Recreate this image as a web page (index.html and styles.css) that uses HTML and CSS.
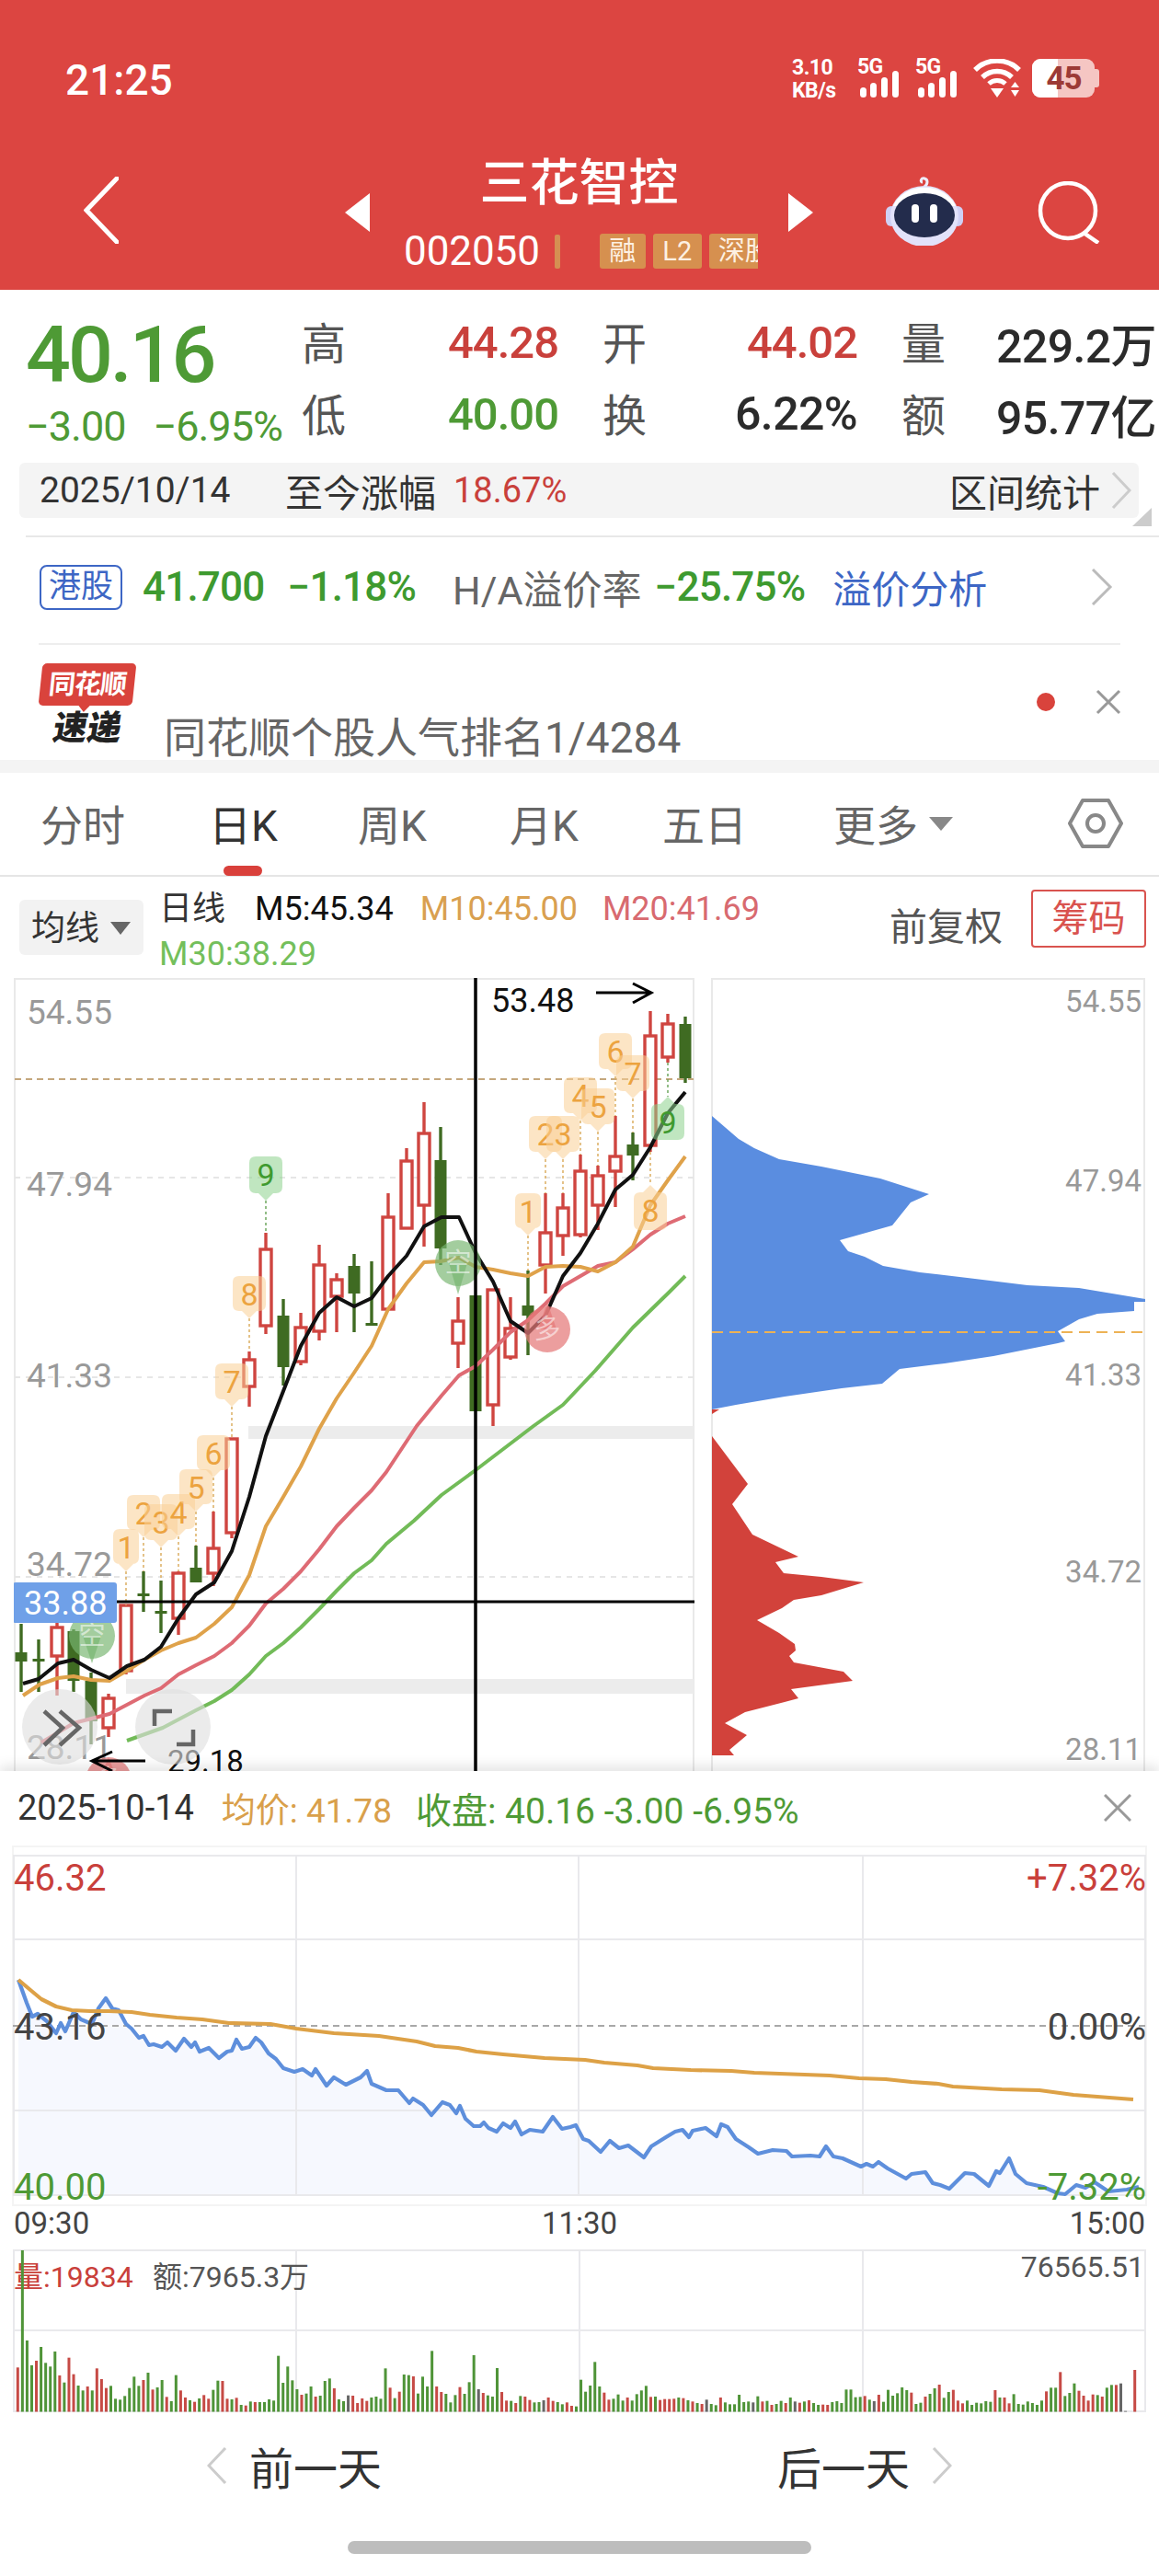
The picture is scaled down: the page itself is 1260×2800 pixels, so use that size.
FILE: index.html
```html
<!DOCTYPE html>
<html lang="zh">
<head>
<meta charset="utf-8">
<title>三花智控</title>
<link rel="stylesheet" href="styles.css">
</head>
<body>
<div class="phone">
  <header class="top">
    <div class="status">
      <span class="clock">21:25</span>
      <div class="status-icons">
        <div class="speed"><span>3.10</span><span>KB/s</span></div>
        <div class="sim">
          <span class="sim-label">5G</span>
          <svg class="signal" viewBox="0 0 47 29"><rect x="3" y="18" width="7" height="11" rx="3.5"/><rect x="14" y="13" width="7" height="16" rx="3.5"/><rect x="26" y="7" width="7" height="22" rx="3.5"/><rect x="38" y="0" width="7" height="29" rx="3.5"/></svg>
        </div>
        <div class="sim">
          <span class="sim-label">5G</span>
          <svg class="signal" viewBox="0 0 47 29"><rect x="3" y="18" width="7" height="11" rx="3.5"/><rect x="14" y="13" width="7" height="16" rx="3.5"/><rect x="26" y="7" width="7" height="22" rx="3.5"/><rect x="38" y="0" width="7" height="29" rx="3.5"/></svg>
        </div>
        <svg class="wifi" viewBox="0 0 52 42"><path d="M2 12 A34 34 0 0 1 50 12" fill="none" stroke="#fff" stroke-width="5.5"/><path d="M10 20 A23 23 0 0 1 42 20" fill="none" stroke="#fff" stroke-width="5.5"/><path d="M17 27 A13 13 0 0 1 35 27" fill="none" stroke="#fff" stroke-width="5"/><path d="M19 32 H33 L26 42Z" fill="#fff"/><path d="M41 31 L45.5 25 L50 31Z M41 34 H50 L45.5 41Z" fill="#fff"/></svg>
        <div class="battery"><div class="battery-level"></div><span class="battery-text">45</span></div>
      </div>
    </div>
    <div class="nav">
      <svg class="back" viewBox="0 0 38 73"><path d="M36 2 L3 36.5 L36 71" fill="none" stroke="#fff" stroke-width="5" stroke-linecap="round"/></svg>
      <svg class="tri" viewBox="0 0 27 42"><path d="M27 0 V42 L0 21Z" fill="#fff"/></svg>
      <div class="stock">
        <div class="stock-name">三花智控</div>
        <div class="stock-sub">
          <span class="stock-code">002050</span>
          <span class="stock-tick"></span>
          <span class="tag">融</span><span class="tag tag-l2">L2</span><span class="tag tag-cut">深股通</span>
        </div>
      </div>
      <svg class="tri" viewBox="0 0 27 42"><path d="M0 0 V42 L27 21Z" fill="#fff"/></svg>
      <svg class="robot" viewBox="0 0 84 77">
        <path d="M42 13 C46 10 46 5 42 4 C38 3 37 8 40 8" fill="none" stroke="#eef" stroke-width="3"/>
        <rect x="0" y="34" width="12" height="22" rx="6" fill="#cfd0f5"/><rect x="72" y="34" width="12" height="22" rx="6" fill="#cfd0f5"/>
        <ellipse cx="42" cy="45" rx="37" ry="33" fill="#e2e2fa"/>
        <path d="M8 34 A36 30 0 0 1 76 34 Z" fill="#ffffff"/>
        <ellipse cx="42" cy="44" rx="33" ry="24" fill="#232c4c"/>
        <rect x="28" y="32" width="8" height="20" rx="4" fill="#fff"/><rect x="48" y="32" width="8" height="20" rx="4" fill="#fff"/>
      </svg>
      <svg class="search" viewBox="0 0 68 68"><circle cx="33" cy="32" r="30" fill="none" stroke="#fff" stroke-width="4.5"/><path d="M50 56 L66 67" fill="none" stroke="#fff" stroke-width="4.5"/></svg>
    </div>
  </header>

  <section class="quote">
    <div class="price">
      <div class="price-now">40.16</div>
      <div class="price-change"><span>−3.00</span><span>−6.95%</span></div>
    </div>
    <div class="stats">
      <div class="stat"><span class="stat-label">高</span><span class="up">44.28</span></div>
      <div class="stat"><span class="stat-label">开</span><span class="up">44.02</span></div>
      <div class="stat"><span class="stat-label">量</span><span class="dark">229.2万</span></div>
      <div class="stat"><span class="stat-label">低</span><span class="down">40.00</span></div>
      <div class="stat"><span class="stat-label">换</span><span class="dark">6.22%</span></div>
      <div class="stat"><span class="stat-label">额</span><span class="dark">95.77亿</span></div>
    </div>
  </section>

  <section class="range">
    <span class="range-date">2025/10/14</span>
    <span class="range-label">至今涨幅</span>
    <span class="range-value">18.67%</span>
    <span class="range-link">区间统计</span>
    <svg class="chev-range" viewBox="0 0 22 40"><path d="M2 1 L20 20 L2 39" fill="none" stroke="#ccc" stroke-width="3"/></svg>
    <span class="range-corner"></span>
  </section>

  <section class="hk">
    <span class="hk-badge">港股</span>
    <span class="hk-price">41.700</span>
    <span class="hk-pct">−1.18%</span>
    <span class="hk-label">H/A溢价率</span>
    <span class="hk-prem">−25.75%</span>
    <span class="hk-link">溢价分析</span>
    <svg class="chev-hk" viewBox="0 0 24 40"><path d="M2 1 L21 20 L2 39" fill="none" stroke="#bbb" stroke-width="3"/></svg>
  </section>

  <section class="news">
    <div class="news-logo">
      <div class="news-logo-top"><span>同花顺</span></div>
      <div class="news-logo-bottom">速递</div>
    </div>
    <span class="news-text">同花顺个股人气排名1/4284</span>
    <span class="news-dot"></span>
    <svg class="news-close" viewBox="0 0 28 28"><path d="M2 2 L26 26 M26 2 L2 26" stroke="#999" stroke-width="3" fill="none"/></svg>
  </section>

  <nav class="tabs">
    <span class="tab">分时</span>
    <span class="tab tab-active">日K</span>
    <span class="tab">周K</span>
    <span class="tab">月K</span>
    <span class="tab">五日</span>
    <span class="tab tab-more">更多<svg class="more-caret" viewBox="0 0 26 15"><path d="M0 0 H26 L13 15Z" fill="#888"/></svg></span>
    <svg class="hex" viewBox="0 0 60 56"><path d="M16 3 H44 L58 28 L44 53 H16 L2 28Z" fill="none" stroke="#888" stroke-width="4" stroke-linejoin="round"/><circle cx="30" cy="28" r="9" fill="none" stroke="#888" stroke-width="4"/></svg>
  </nav>

  <section class="ma-row">
    <div class="ma-select">均线<svg class="ma-caret" viewBox="0 0 22 14"><path d="M0 0 H22 L11 14Z" fill="#666"/></svg></div>
    <div class="ma-legend">
      <div class="ma-line">
        <span class="ma-title">日线</span>
        <span class="ma-5">M5:45.34</span>
        <span class="ma-10">M10:45.00</span>
        <span class="ma-20">M20:41.69</span>
      </div>
      <div class="ma-line"><span class="ma-30">M30:38.29</span></div>
    </div>
    <span class="ma-adjust">前复权</span>
    <span class="ma-chip">筹码</span>
  </section>

  <section class="charts">
    <svg class="kline" viewBox="15 1063 740 862">
      <path class="panel-edge" d="M16 1925 V1064 H754 V1925"/>
      <rect class="band" x="270" y="1550" width="484" height="14"/>
      <rect class="band" x="137" y="1825" width="617" height="16"/>
      <path class="grid-dash" d="M16 1280 H754 M16 1497 H754 M16 1714 H754"/>
      <path class="last-dash" d="M16 1173 H754"/>
      <text class="axis" x="29" y="1113">54.55</text>
      <text class="axis" x="29" y="1300">47.94</text>
      <text class="axis" x="29" y="1508">41.33</text>
      <text class="axis" x="29" y="1713">34.72</text>
      <text class="axis" x="29" y="1912">28.11</text>
      <g id="candles"></g>
      <polyline class="ma ma-green" points="138,1892 177,1878 213,1859 233,1849 252,1837 271,1820 289,1800 308,1786 327,1769 347,1749 366,1729 385,1710 404,1696 420,1678 450,1653 480,1625 517,1598 580,1550 612,1527 647,1490 688,1443 727,1405 745,1387"/>
      <polyline class="ma ma-pink" points="45,1894 80,1873 119,1863 157,1843 175,1835 194,1820 213,1810 233,1800 252,1786 271,1767 289,1743 308,1727 327,1708 347,1684 366,1659 385,1639 404,1620 420,1600 453,1550 480,1517 499,1495 517,1485 536,1467 555,1448 574,1435 593,1417 612,1398 631,1387 650,1376 669,1372 688,1358 707,1342 726,1330 745,1322"/>
      <polyline class="ma ma-orange" points="25,1843 43,1831 63,1824 80,1822 99,1826 119,1827 138,1816 157,1804 175,1794 194,1786 213,1780 233,1765 252,1747 271,1712 289,1659 308,1627 327,1594 347,1553 366,1520 385,1492 404,1463 422,1423 442,1395 461,1372 479,1371 499,1367 517,1377 536,1380 555,1384 574,1387 593,1377 612,1376 631,1377 650,1382 669,1372 688,1355 707,1310 726,1283 745,1257"/>
      <polyline class="ma ma-black" points="25,1830 42,1825 63,1808 80,1804 99,1815 119,1824 138,1811 157,1804 175,1790 194,1759 213,1733 233,1720 252,1686 271,1627 289,1561 308,1512 327,1463 347,1427 366,1410 385,1420 404,1411 422,1387 442,1365 461,1333 480,1323 499,1323 517,1362 536,1393 555,1436 574,1449 593,1430 612,1387 631,1362 650,1330 669,1293 688,1277 707,1247 726,1210 745,1187"/>
      <g id="markers"></g>
      <path class="cross" d="M517 1063 V1925"/>
      <path class="cross-h" d="M127 1741 H755"/>
      <rect class="price-box" x="14" y="1720" width="113" height="44" rx="3"/>
      <text class="price-box-text" x="26" y="1755">33.88</text>
      <text class="extreme" x="534" y="1100">53.48</text>
      <path class="arrow" d="M648 1079 H706 M688 1069 L708 1079 L688 1090"/>
      <text class="extreme extreme-low" x="182" y="1926">29.18</text>
      <path class="arrow" d="M158 1914 H102 M122 1904 L100 1914 L122 1925"/>
      <circle class="float-btn" cx="65" cy="1877" r="41"/>
      <circle class="float-btn" cx="188" cy="1877" r="41"/>
      <path class="float-icon" d="M48 1860 L68 1878 L48 1897 M65 1860 L86 1878 L65 1897"/>
      <path class="float-icon" d="M168 1876 V1860 H187 M210 1880 V1896 H192"/>
    </svg>
    <svg class="chips" viewBox="773 1063 472 862">
      <path class="panel-edge" d="M774 1925 V1064 H1244 V1925"/>
      <polygon class="chip-blue" points="774,1213 803,1238 820,1248 847,1260 893,1268 957,1281 1010,1298 990,1307 970,1332 913,1348 922,1360 940,1366 960,1376 1000,1383 1060,1390 1117,1397 1173,1400 1233,1410 1245,1412 1245,1415 1233,1415 1233,1425 1193,1428 1173,1434 1150,1447 1158,1458 1150,1460 1080,1474 1027,1482 978,1488 959,1504 915,1509 853,1518 800,1527 774,1532"/>
      <polygon class="chip-red" points="774,1532 782,1532 774,1537"/>
      <polygon class="chip-red" points="774,1561 813,1613 796,1635 818,1668 868,1692 843,1698 852,1710 893,1714 939,1720 893,1734 863,1739 850,1748 823,1761 847,1775 864,1787 865,1794 858,1800 863,1807 917,1817 927,1827 860,1836 868,1846 853,1850 810,1861 788,1873 812,1886 793,1902 798,1908 774,1908"/>
      <path class="chip-dash" d="M774 1448 H1245"/>
      <text class="axis-right" x="1241" y="1100">54.55</text>
      <text class="axis-right" x="1241" y="1295">47.94</text>
      <text class="axis-right" x="1241" y="1506">41.33</text>
      <text class="axis-right" x="1241" y="1720">34.72</text>
      <text class="axis-right" x="1241" y="1913">28.11</text>
    </svg>
  </section>

  <section class="sheet">
    <div class="sheet-head">
      <span class="sheet-date">2025-10-14</span>
      <span class="sheet-avg">均价: 41.78</span>
      <span class="sheet-close">收盘: 40.16 -3.00 -6.95%</span>
      <svg class="sheet-x" viewBox="0 0 30 30"><path d="M1 1 L29 29 M29 1 L1 29" stroke="#999" stroke-width="3" fill="none"/></svg>
    </div>
    <svg class="intraday" viewBox="0 2005 1260 395">
      <rect class="box-pale" x="14" y="2007" width="1232" height="390"/>
      <polygon class="area" points="20,2152 29,2177 35,2192 41,2189 51,2197 61,2210 66,2199 71,2208 80,2187 88,2195 100,2200 107,2183 115,2172 122,2183 129,2185 137,2200 143,2205 151,2215 156,2213 162,2223 167,2222 176,2225 182,2220 191,2229 200,2216 208,2225 212,2220 217,2230 227,2226 238,2237 247,2230 252,2229 257,2217 263,2227 271,2225 278,2215 284,2220 292,2232 300,2238 308,2248 320,2252 329,2249 339,2256 343,2249 355,2267 363,2258 376,2266 392,2258 399,2251 404,2265 420,2272 433,2272 445,2286 449,2281 460,2288 469,2299 481,2285 489,2288 496,2297 500,2289 506,2303 515,2311 522,2311 526,2307 531,2313 540,2317 547,2308 555,2313 560,2306 567,2320 576,2315 590,2317 601,2301 611,2314 620,2312 626,2310 634,2325 640,2327 653,2339 663,2327 673,2335 683,2332 700,2345 708,2333 724,2323 734,2317 742,2315 749,2323 753,2316 767,2313 779,2322 784,2309 791,2312 800,2325 814,2334 824,2341 840,2337 855,2338 861,2344 881,2343 891,2344 898,2333 906,2344 916,2346 936,2355 942,2352 949,2355 955,2350 965,2357 985,2368 991,2363 1006,2361 1014,2373 1022,2375 1032,2379 1049,2362 1059,2363 1075,2376 1083,2360 1087,2362 1097,2346 1104,2363 1116,2373 1134,2377 1150,2384 1158,2385 1170,2375 1180,2378 1190,2372 1205,2382 1225,2380 1238,2377 1238,2386 20,2386"/>
      <path class="grid" d="M14 2017 H1246 M14 2108 H1246 M14 2294 H1246 M14 2386 H1246 M15 2017 V2386 M322 2017 V2386 M629 2017 V2386 M938 2017 V2386 M1245 2017 V2386"/>
      <path class="zero-dash" d="M14 2202 H1246"/>
      <polyline class="day-blue" points="20,2152 29,2177 35,2192 41,2189 51,2197 61,2210 66,2199 71,2208 80,2187 88,2195 100,2200 107,2183 115,2172 122,2183 129,2185 137,2200 143,2205 151,2215 156,2213 162,2223 167,2222 176,2225 182,2220 191,2229 200,2216 208,2225 212,2220 217,2230 227,2226 238,2237 247,2230 252,2229 257,2217 263,2227 271,2225 278,2215 284,2220 292,2232 300,2238 308,2248 320,2252 329,2249 339,2256 343,2249 355,2267 363,2258 376,2266 392,2258 399,2251 404,2265 420,2272 433,2272 445,2286 449,2281 460,2288 469,2299 481,2285 489,2288 496,2297 500,2289 506,2303 515,2311 522,2311 526,2307 531,2313 540,2317 547,2308 555,2313 560,2306 567,2320 576,2315 590,2317 601,2301 611,2314 620,2312 626,2310 634,2325 640,2327 653,2339 663,2327 673,2335 683,2332 700,2345 708,2333 724,2323 734,2317 742,2315 749,2323 753,2316 767,2313 779,2322 784,2309 791,2312 800,2325 814,2334 824,2341 840,2337 855,2338 861,2344 881,2343 891,2344 898,2333 906,2344 916,2346 936,2355 942,2352 949,2355 955,2350 965,2357 985,2368 991,2363 1006,2361 1014,2373 1022,2375 1032,2379 1049,2362 1059,2363 1075,2376 1083,2360 1087,2362 1097,2346 1104,2363 1116,2373 1134,2377 1150,2384 1158,2385 1170,2375 1180,2378 1190,2372 1205,2382 1225,2380 1238,2377"/>
      <polyline class="day-orange" points="20,2152 33,2163 45,2173 61,2181 78,2185 98,2186 118,2186 143,2187 163,2190 192,2193 220,2195 249,2199 294,2200 322,2205 363,2210 412,2213 453,2219 473,2224 498,2226 518,2230 547,2233 592,2237 636,2239 657,2242 693,2245 710,2248 751,2250 795,2251 820,2253 902,2256 934,2259 963,2260 991,2263 1020,2265 1036,2268 1089,2271 1130,2272 1167,2277 1232,2282"/>
      <text class="day-axis day-up" x="15" y="2055">46.32</text>
      <text class="day-axis day-flat" x="15" y="2217">43.16</text>
      <text class="day-axis day-down" x="15" y="2391">40.00</text>
      <text class="day-axis day-up day-end" x="1246" y="2055">+7.32%</text>
      <text class="day-axis day-flat day-end" x="1246" y="2217">0.00%</text>
      <text class="day-axis day-down day-end" x="1246" y="2391">-7.32%</text>
    </svg>
    <div class="time-axis"><span>09:30</span><span>11:30</span><span>15:00</span></div>
    <svg id="volume" class="volume" viewBox="0 2444 1260 180">
      <path class="grid" d="M14 2446 H1246 M14 2533 H1246 M14 2621 H1246 M15 2446 V2621 M322 2446 V2621 M630 2446 V2621 M938 2446 V2621 M1245 2446 V2621"/>
      <text class="vol-text" x="15" y="2486"><tspan class="vol-red">量:19834</tspan><tspan class="vol-gray" x="166">额:7965.3万</tspan></text>
      <g id="vol-bars"></g>
      <text class="vol-text vol-gray vol-end" x="1244" y="2475">76565.51</text>
    </svg>
    <div class="day-nav">
      <div class="day-link">
        <svg class="chev-day" viewBox="0 0 22 40"><path d="M20 1 L2 20 L20 39" fill="none" stroke="#ccc" stroke-width="3"/></svg>
        <span>前一天</span>
      </div>
      <div class="day-link">
        <span>后一天</span>
        <svg class="chev-day" viewBox="0 0 22 40"><path d="M2 1 L20 20 L2 39" fill="none" stroke="#ccc" stroke-width="3"/></svg>
      </div>
    </div>
    <div class="home-bar"></div>
  </section>
</div>
<script src="script.js"></script>
</body>
</html>
```
FILE: styles.css
```css
* { box-sizing: border-box; }
html, body { margin: 0; padding: 0; background: #fff; }
body { font-family: Roboto, "Noto Sans CJK SC", sans-serif; color: #333; }
svg { display: block; flex: none; }
.phone { width: 1260px; height: 2800px; overflow: hidden; }

.top { height: 315px; background: #dc4541; color: #fff; padding-top: 64px; }
.status { height: 42px; display: flex; justify-content: space-between; padding: 0 65px 0 71px; }
.clock { font-size: 46px; font-weight: 500; line-height: 44px; margin-top: 1px; }
.status-icons { display: flex; align-items: flex-start; }
.speed { width: 71px; margin-top: -3px; display: flex; flex-direction: column; font-size: 23px; font-weight: 700; line-height: 25px; letter-spacing: -.5px; }
.sim { width: 63px; display: flex; flex-direction: column; }
.sim-label { font-size: 23px; font-weight: 700; line-height: 18px; letter-spacing: -.8px; }
.signal { width: 47px; height: 29px; margin-top: -5px; fill: #fff; }
.wifi { width: 52px; height: 42px; margin-right: 12px; }
.battery { position: relative; width: 73px; height: 42px; display: flex; align-items: center; justify-content: center; }
.battery::before { content: ""; position: absolute; left: 0; top: 0; bottom: 0; width: 68px; background: #f5c6c3; border-radius: 9px; }
.battery::after { content: ""; position: absolute; right: 0; top: 11px; width: 6px; height: 20px; background: #f5c6c3; border-radius: 0 3px 3px 0; }
.battery-level { position: absolute; left: 0; top: 0; bottom: 0; width: 28px; background: #fff; border-radius: 9px 0 0 9px; }
.battery-text { position: relative; font-size: 35px; font-weight: 700; color: #9c3a36; letter-spacing: -1px; margin-right: 4px; }

.nav { margin-top: 67px; display: grid; grid-template-columns: 284px 27px 455px 27px 79px 84px 81px 68px; padding-left: 91px; height: 119px; }
.back { grid-column: 1; width: 38px; height: 73px; margin-top: 19px; }
.tri { width: 27px; height: 42px; margin-top: 37px; }
.stock { display: flex; flex-direction: column; align-items: center; }
.stock-name { font-size: 54px; line-height: 54px; font-weight: 500; }
.stock-sub { align-self: flex-start; margin-left: 37px; margin-top: 27px; display: flex; align-items: center; height: 38px; }
.stock-code { font-size: 44px; line-height: 38px; letter-spacing: -.1px; }
.stock-tick { width: 6px; height: 37px; background: #d58f52; margin-left: 16px; margin-right: 43px; border-radius: 2px; }
.tag { width: 50px; height: 38px; background: #d6904f; color: #fdf0e2; font-size: 29px; line-height: 38px; text-align: center; border-radius: 3px; margin-right: 8px; }
.tag-l2 { width: 53px; }
.tag-cut { width: 53px; margin-right: 0; border-radius: 3px 0 0 3px; overflow: hidden; white-space: nowrap; text-align: left; padding-left: 10px; }
.robot { grid-column: 6; width: 84px; height: 77px; margin-top: 17px; }
.search { grid-column: 8; width: 68px; height: 68px; margin-top: 24px; }

.quote { height: 188px; display: flex; padding: 24px 0 0 28px; }
.price { width: 300px; }
.price-now { font-size: 86px; line-height: 90px; font-weight: 500; color: #4e9a35; letter-spacing: -3px; margin-top: 2px; }
.price-change { display: flex; gap: 30px; font-size: 45px; line-height: 50px; color: #4e9a35; margin-top: 8px; letter-spacing: -1px; }
.stats { display: grid; grid-template-columns: 279px 277px 277px; grid-auto-rows: 78px; column-gap: 48px; margin-top: 1px; }
.stat { display: flex; justify-content: space-between; align-items: center; height: 60px; font-size: 49px; letter-spacing: -1px; font-weight: 500; }
.stat-label { font-size: 48px; font-weight: 400; color: #555; letter-spacing: 0; }
.up { color: #c9403b; margin-top: 4px; }
.down { color: #4e9a35; margin-top: 4px; }
.dark { color: #2b2b2b; margin-top: 4px; font-size: 50px; letter-spacing: -.6px; }

.range { position: relative; height: 60px; margin: 0 22px 19px 21px; background: #f4f4f4; border-radius: 6px; display: flex; align-items: center; padding-left: 22px; font-size: 39px; }
.range-date { width: 267px; color: #333; }
.range-label { width: 183px; font-size: 41px; color: #333; }
.range-value { color: #c9403b; font-size: 38px; }
.range-link { margin-left: auto; font-size: 41px; color: #333; margin-right: 12px; }
.chev-range { width: 22px; height: 40px; margin-right: 8px; }
.range-corner { position: absolute; right: -14px; bottom: -9px; width: 21px; height: 20px; background: #ccc; clip-path: polygon(100% 0, 100% 100%, 0 100%); }

.hk { height: 118px; margin-left: 28px; border-top: 2px solid #e8e8e8; display: flex; align-items: center; padding: 0 50px 8px 15px; font-size: 44px; }
.hk-badge { width: 90px; height: 49px; border: 2px solid #3d66c5; border-radius: 8px; color: #3d66c5; font-size: 35px; line-height: 44px; text-align: center; margin-right: 22px; }
.hk-price, .hk-pct, .hk-prem { color: #3e9a2f; font-weight: 500; letter-spacing: -.8px; }
.hk-pct { margin-left: 25px; }
.hk-label { margin-left: 40px; color: #666; font-size: 43px; }
.hk-prem { margin-left: 14px; }
.hk-link { margin-left: 30px; color: #3d66c5; font-size: 42px; margin-top: -2px; }
.chev-hk { width: 24px; height: 40px; margin-left: auto; }

.news { position: relative; height: 140px; border-bottom: 14px solid #f4f4f4; padding-top: 21px; display: flex; }
.news::before { content: ""; position: absolute; left: 42px; right: 42px; top: -1px; height: 2px; background: #eee; }
.news-logo { margin-left: 44px; width: 102px; }
.news-logo-top { position: relative; height: 46px; background: #d9433c; border-radius: 5px; transform: skewX(-6deg); color: #fff; font-size: 29px; font-weight: 700; line-height: 46px; text-align: center; }
.news-logo-top::after { content: ""; position: absolute; left: 43px; bottom: -7px; width: 14px; height: 8px; background: #d9433c; clip-path: polygon(0 0, 100% 0, 50% 100%); }
.news-logo-top span { display: inline-block; letter-spacing: -1px; }
.news-logo-bottom { transform: skewX(-10deg); font-size: 37px; font-weight: 900; color: #222; line-height: 42px; text-align: center; margin-top: 4px; }
.news-text { font-size: 46px; color: #666; line-height: 62px; margin-left: 32px; margin-top: 50px; height: 55px; overflow: hidden; }
.news-dot { width: 20px; height: 20px; border-radius: 50%; background: #d9433c; margin-left: auto; margin-top: 32px; }
.news-close { width: 28px; height: 28px; margin: 28px 41px 0 44px; }

.tabs { position: relative; height: 113px; border-bottom: 2px solid #e5e5e5; display: grid; grid-template-columns: 185px 160px 165px 166px 186px 255px 60px; padding: 35px 0 0 44px; font-size: 46px; line-height: 46px; color: #666; align-items: start; }
.tab { position: relative; white-space: nowrap; }
.tab-active { color: #333; margin-left: -2px; }
.tab-active::after { content: ""; position: absolute; left: 16px; width: 42px; height: 11px; top: 66px; background: #d9403b; border-radius: 6px; }
.tab-more { display: flex; align-items: center; }
.more-caret { width: 26px; height: 15px; margin-left: 12px; margin-top: -6px; }
.hex { width: 60px; height: 56px; margin-top: -8px; }

.ma-row { height: 110px; display: flex; padding: 25px 14px 0 21px; align-items: flex-start; }
.ma-select { width: 135px; height: 60px; background: #f2f2f2; border-radius: 6px; font-size: 37px; line-height: 52px; padding: 4px 0 0 13px; display: flex; align-items: center; color: #333; }
.ma-caret { width: 22px; height: 14px; margin: -3px 0 0 12px; }
.ma-legend { margin-left: 17px; margin-top: -14px; font-size: 36px; line-height: 49px; flex: 1; }
.ma-line { display: flex; gap: 29px; }
.ma-title { color: #333; margin-right: 3px; }
.ma-5 { color: #111; }
.ma-10 { color: #d9a050; }
.ma-20 { color: #d86a70; margin-left: -2px; }
.ma-30 { color: #74bf5c; }
.ma-adjust { font-size: 41px; line-height: 48px; color: #555; margin-top: 6px; margin-right: 31px; }
.ma-chip { width: 125px; height: 63px; border: 2px solid #d9534f; border-radius: 4px; color: #d9534f; font-size: 40px; line-height: 59px; text-align: center; margin-top: -11px; }

.charts { height: 862px; display: flex; padding-left: 15px; gap: 18px; }
.kline { width: 740px; height: 862px; overflow: hidden; }
.chips { width: 472px; height: 862px; overflow: hidden; }
.panel-edge { fill: none; stroke: #e9e9e9; stroke-width: 2; }
.band { fill: #ececec; }
.grid-dash { stroke: #e6e6e6; stroke-width: 2; stroke-dasharray: 6 6; fill: none; }
.last-dash { stroke: #c4a77d; stroke-width: 2; stroke-dasharray: 7 5; fill: none; }
.axis { font-size: 37px; fill: #999; }
.axis-right { font-size: 33px; fill: #999; text-anchor: end; }
.ma { fill: none; stroke-width: 4; stroke-linejoin: round; }
.ma-black { stroke: #111; }
.ma-orange { stroke: #dfa24a; }
.ma-pink { stroke: #de6b74; }
.ma-green { stroke: #72bb58; }
.cross { stroke: #000; stroke-width: 3.5; fill: none; }
.cross-h { stroke: #000; stroke-width: 3; fill: none; }
.price-box { fill: #6fa0e8; }
.price-box-text { font-size: 36px; fill: #fff; }
.extreme { font-size: 36px; fill: #111; }
.extreme-low { font-size: 33px; }
.arrow { stroke: #000; stroke-width: 3; fill: none; }
.float-btn { fill: rgba(222, 222, 222, .62); }
.float-icon { stroke: #666; stroke-width: 4.5; fill: none; }
.candle-wick-red { stroke: #cf4540; stroke-width: 3.4; }
.candle-wick-green { stroke: #3f6b22; stroke-width: 3.4; }
.candle-hollow { fill: #fff; stroke: #cf4540; stroke-width: 3.4; }
.candle-solid { fill: #3f6b22; }
.mark-o { fill: rgba(250, 208, 150, .55); }
.mark-g { fill: rgba(140, 210, 140, .55); }
.mark-num-o { font-size: 34px; fill: #eca33f; text-anchor: middle; }
.mark-num-g { font-size: 34px; fill: #3f9a2f; text-anchor: middle; }
.lead-o { stroke: #dcae62; stroke-width: 1.5; stroke-dasharray: 3 3; }
.lead-g { stroke: #6fa85f; stroke-width: 1.5; stroke-dasharray: 3 3; }
.sig-kong { fill: rgba(120, 182, 112, .68); }
.sig-duo { fill: rgba(228, 120, 120, .72); }
.sig-text { font-size: 29px; fill: rgba(255, 255, 255, .55); text-anchor: middle; }
.chip-blue { fill: #5a8de0; }
.chip-red { fill: #d2423b; }
.chip-dash { stroke: #edb255; stroke-width: 2; stroke-dasharray: 12 7; fill: none; }

.sheet { position: relative; height: 875px; background: #fff; box-shadow: 0 -6px 12px rgba(0, 0, 0, .1); }
.sheet-head { height: 80px; display: flex; align-items: center; padding-left: 19px; font-size: 37px; position: relative; }
.sheet-date { color: #333; font-size: 38px; }
.sheet-avg { margin-left: 30px; color: #d9a04b; }
.sheet-close { margin-left: 26px; color: #4e9a35; font-size: 39px; }
.sheet-x { width: 30px; height: 30px; margin-left: auto; margin-right: 30px; }
.intraday { width: 1260px; height: 395px; }
.box-pale { fill: #fff; stroke: #f4f4f4; stroke-width: 2; }
.area { fill: #f6f8fe; }
.grid { stroke: #e9e9ec; stroke-width: 2; fill: none; }
.zero-dash { stroke: #a8a8a8; stroke-width: 2; stroke-dasharray: 7 5; fill: none; }
.day-blue { fill: none; stroke: #5e8fdc; stroke-width: 4.2; stroke-linejoin: round; }
.day-orange { fill: none; stroke: #dda146; stroke-width: 4.2; stroke-linejoin: round; }
.day-axis { font-size: 40px; }
.day-up { fill: #c9403b; }
.day-flat { fill: #444; }
.day-down { fill: #4e9a35; }
.day-end { text-anchor: end; }
.time-axis { height: 44px; display: flex; justify-content: space-between; padding: 0 15px; font-size: 33px; line-height: 34px; color: #444; }
.volume { width: 1260px; height: 180px; }
.vol-text { font-size: 32px; }
.vol-red { fill: #c9403b; }
.vol-gray { fill: #555; }
.vol-end { text-anchor: end; }
.vbar-r { fill: #c64a45; }
.vbar-g { fill: #4f9438; }
.vbar-k { fill: #666; }

.day-nav { height: 116px; display: flex; justify-content: space-between; padding: 26px 225px 0; }
.day-link { display: flex; align-items: center; gap: 24px; height: 60px; font-size: 48px; color: #333; }
.chev-day { width: 22px; height: 40px; }
.home-bar { width: 504px; height: 14px; border-radius: 7px; background: #bdbdbd; margin: 22px auto 0; }
```
FILE: script.js
```js
var NS = "http://www.w3.org/2000/svg";
function el(parent, tag, attrs, text) {
  var n = document.createElementNS(NS, tag);
  for (var k in attrs) n.setAttribute(k, attrs[k]);
  if (text) n.textContent = text;
  parent.appendChild(n);
  return n;
}

// x, wickTop, wickBottom, bodyTop, bodyBottom, up?
var candles = [
  [23,1765,1839,1796,1806,0],[42,1782,1839,1803,1806,0],[62,1745,1843,1769,1800,1],[80,1771,1839,1773,1827,0],
  [99,1818,1896,1827,1871,0],[118,1841,1888,1846,1878,1],[137,1745,1820,1745,1816,1],[156,1708,1752,1732,1735,0],
  [175,1718,1775,1751,1754,0],[194,1708,1777,1710,1759,1],[213,1680,1720,1704,1720,0],[232,1643,1724,1683,1710,1],
  [252,1564,1672,1564,1666,1],[271,1469,1529,1478,1507,1],[289,1340,1450,1358,1441,1],[308,1412,1506,1430,1486,0],
  [327,1427,1484,1443,1480,1],[347,1353,1457,1375,1447,1],[366,1384,1448,1391,1409,1],[385,1363,1448,1376,1406,0],
  [404,1371,1441,1438,1441,0],[422,1297,1423,1323,1423,1],[442,1248,1336,1262,1335,1],[461,1198,1355,1232,1310,1],
  [479,1225,1375,1261,1357,0],[498,1410,1487,1436,1460,1],[517,1408,1534,1408,1534,0],[536,1402,1550,1402,1527,1],
  [555,1410,1478,1444,1475,1],[574,1381,1473,1419,1430,0],[593,1297,1406,1340,1375,1],[612,1297,1365,1313,1343,1],
  [631,1255,1345,1273,1342,1],[650,1267,1337,1278,1310,1],[669,1213,1312,1257,1273,1],[688,1231,1283,1244,1256,0],
  [707,1099,1252,1126,1245,1],[726,1102,1155,1113,1149,1],[745,1105,1177,1113,1172,0]
];
var cg = document.getElementById("candles");
candles.forEach(function (c) {
  el(cg, "line", { x1: c[0], x2: c[0], y1: c[1], y2: c[2], "class": c[5] ? "candle-wick-red" : "candle-wick-green" });
  if (c[5]) el(cg, "rect", { x: c[0] - 6, y: c[3], width: 12, height: c[4] - c[3], "class": "candle-hollow" });
  else el(cg, "rect", { x: c[0] - 6.5, y: c[3], width: 13, height: c[4] - c[3], "class": "candle-solid" });
});

// cx, top, bottom, number, colour ("o"/"g"), pointer ("d"/"u"), leader end y
var marks = [
  [137,1662,1708,"1","o","d",1745],[156,1625,1671,"2","o","d",1708],[175,1635,1682,"3","o","d",1718],
  [194,1624,1670,"4","o","d",1708],[213,1597,1643,"5","o","d",1680],[232,1560,1606,"6","o","d",1643],
  [252,1482,1529,"7","o","d",1564],[271,1387,1433,"8","o","d",1469],[289,1257,1305,"9","g","d",1340],
  [574,1297,1343,"1","o","d",1381],[593,1213,1260,"2","o","d",1297],[612,1213,1260,"3","o","d",1297],
  [631,1171,1218,"4","o","d",1255],[650,1183,1230,"5","o","d",1267],[669,1123,1170,"6","o","d",1213],
  [688,1147,1194,"7","o","d",1231],[707,1288,1337,"8","o","u",1252],[726,1192,1239,"9","g","u",1155]
];
var mg = document.getElementById("markers");
marks.forEach(function (m) {
  var cx = m[0], top = m[1], bot = m[2], hw = m[3] === "1" ? 14 : 18, r = 7, p = 8, d;
  el(mg, "line", { x1: cx, x2: cx, y1: m[5] === "d" ? bot : m[6], y2: m[5] === "d" ? m[6] : top, "class": "lead-" + m[4] });
  if (m[5] === "d") {
    d = "M" + (cx - hw + r) + " " + top + "H" + (cx + hw - r) + "Q" + (cx + hw) + " " + top + " " + (cx + hw) + " " + (top + r) +
        "V" + (bot - p - r) + "Q" + (cx + hw) + " " + (bot - p) + " " + (cx + hw - r) + " " + (bot - p) +
        "H" + (cx + 8) + "L" + cx + " " + bot + "L" + (cx - 8) + " " + (bot - p) +
        "H" + (cx - hw + r) + "Q" + (cx - hw) + " " + (bot - p) + " " + (cx - hw) + " " + (bot - p - r) +
        "V" + (top + r) + "Q" + (cx - hw) + " " + top + " " + (cx - hw + r) + " " + top + "Z";
  } else {
    d = "M" + cx + " " + top + "L" + (cx + 8) + " " + (top + p) + "H" + (cx + hw - r) + "Q" + (cx + hw) + " " + (top + p) + " " + (cx + hw) + " " + (top + p + r) +
        "V" + (bot - r) + "Q" + (cx + hw) + " " + bot + " " + (cx + hw - r) + " " + bot + "H" + (cx - hw + r) + "Q" + (cx - hw) + " " + bot + " " + (cx - hw) + " " + (bot - r) +
        "V" + (top + p + r) + "Q" + (cx - hw) + " " + (top + p) + " " + (cx - hw + r) + " " + (top + p) + "H" + (cx - 8) + "Z";
  }
  el(mg, "path", { d: d, "class": "mark-" + m[4] });
  var ty = m[5] === "d" ? top + 32 : top + 40;
  el(mg, "text", { x: cx, y: ty, "class": "mark-num-" + m[4] }, m[3]);
});

// round signals: cx, cy, label, tip y
[[100,1778,"空",1808],[498,1373,"空",1407],[595,1445,"多",1415],[118,1935,"多",1910]].forEach(function (s) {
  var kong = s[2] === "空";
  var cls = kong ? "sig-kong" : "sig-duo";
  el(mg, "path", { d: "M" + (s[0] - 10) + " " + s[1] + "L" + s[0] + " " + s[3] + "L" + (s[0] + 10) + " " + s[1] + "Z", "class": cls });
  el(mg, "circle", { cx: s[0], cy: s[1], r: 25, "class": cls });
  el(mg, "text", { x: s[0], y: s[1] + 10, "class": "sig-text" }, s[2]);
});

// volume bars: colour letter and top measured in 1/3 px above 2530 (bottom is 275)
var vol = ("r130 g-252 g42 g123 r108 g63 g115 g127 g78 r156 g179 r98 r152 g189 g205 r192 g205 r133 r168 r197 g190 g232 g235 g223 g197 g160 g190 r171 g147 r202 g195 g171 r226 g240 g155 r205 r228 g237 r242 g231 r220 r232 g203 g173 r174 r232 g234 r229 g252 r254 g241 r243 g243 g243 g234 g238 g92 g180 g127 g172 g201 r219 g215 g192 r225 g222 g174 g166 r198 g234 g240 k221 r222 r246 r231 r239 g228 g225 g232 g133 r196 g230 " +
  "r209 g153 g155 r159 g215 g160 g192 g76 r192 r210 g216 g244 g220 r194 g216 g178 g90 k201 r213 g221 g225 g132 r210 r238 g239 r246 g223 r225 r236 g244 g243 k237 r228 r239 g243 g250 r244 r255 g257 g170 g209 g189 g112 g192 r212 r235 g232 g218 g238 r228 g238 g217 g205 g190 r226 g225 r236 r233 r233 r232 g228 r230 g237 r241 g246 r249 k235 g249 g253 r228 g244 g250 g250 g219 g243 g241 k244 g224 r241 g239 r252 g249 g239 " +
  "r246 g228 k241 r245 g241 r237 g246 g252 r251 r252 g243 g240 g246 g202 g202 g227 g226 r223 g235 k240 r219 g242 g203 g222 g214 g195 g204 r212 g249 g245 r225 g216 g198 r186 g229 g210 r203 r238 r247 g238 g252 g245 g247 g240 g242 r204 g228 r228 r247 g217 g249 g251 g241 g246 g252 g238 r208 g196 g196 r145 g223 g213 g182 r206 r222 r238 r218 g220 r225 g196 g187 r187 k182 k272 x275 r138").split(" ");
var vb = document.getElementById("vol-bars");
var x0 = 19.3, step = (1233.7 - 19.3) / (vol.length - 1);
vol.forEach(function (v, i) {
  var c = v.charAt(0);
  if (c === "x") return;
  var top = 2530 + parseInt(v.slice(1), 10) / 3;
  el(vb, "rect", { x: x0 + i * step - 1.5, y: top, width: 3, height: 2621.5 - top, "class": "vbar-" + c });
});
```
